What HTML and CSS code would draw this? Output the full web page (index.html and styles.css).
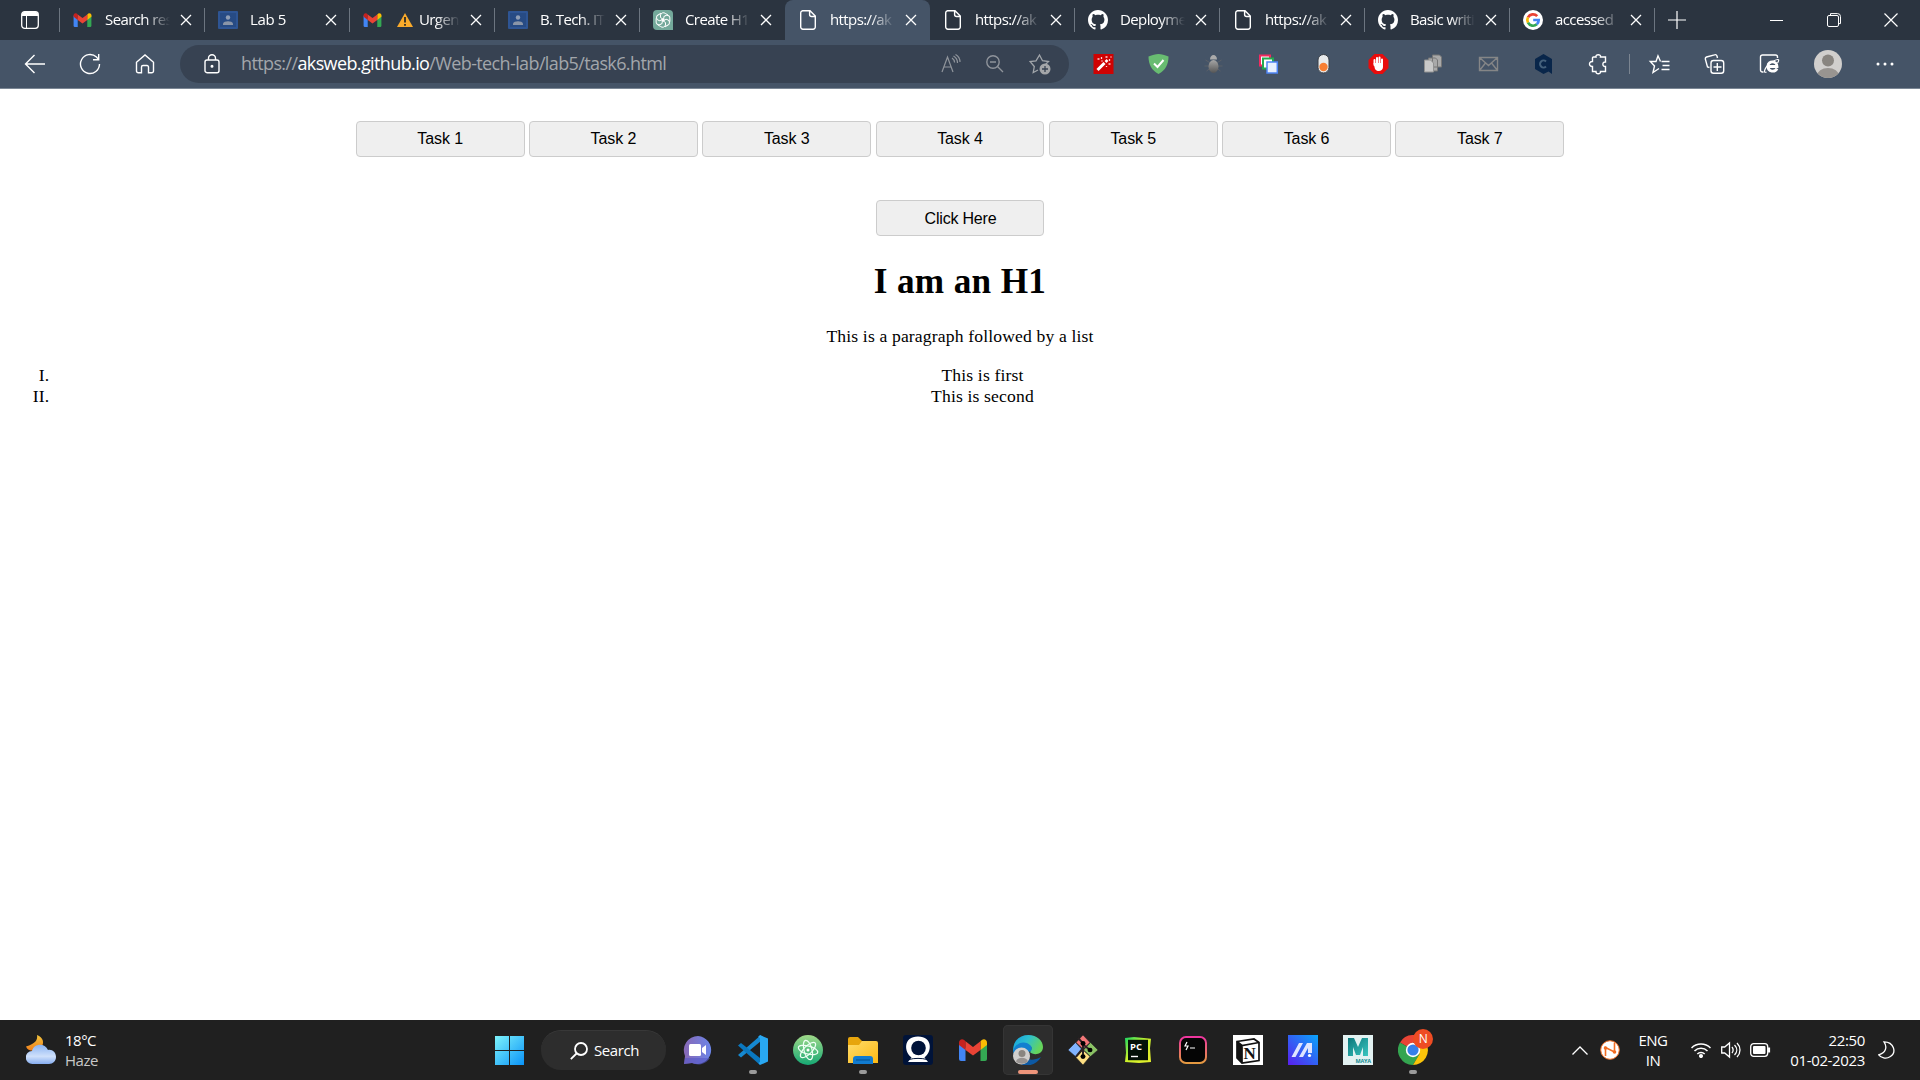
FILE: index.html
```html
<!DOCTYPE html>
<html lang="en">
<head>
<meta charset="utf-8">
<title>Lab 5 - Task 6</title>
<link rel="stylesheet" href="styles.css">
</head>
<body>
<svg class="defs" width="0" height="0">
  <defs>
    <linearGradient id="gWin" x2="1" y2="1"><stop stop-color="#7df3fb"/><stop offset="1" stop-color="#0a93f8"/></linearGradient>
    <linearGradient id="gChat" x2="1" y2="0"><stop stop-color="#8868b5"/><stop offset="1" stop-color="#6b85e8"/></linearGradient>
    <linearGradient id="gAtom" x2="0" y2="1"><stop stop-color="#a0d989"/><stop offset="1" stop-color="#16a974"/></linearGradient>
    <linearGradient id="gFolder" x2="1" y2="1"><stop stop-color="#ffdc6b"/><stop offset="1" stop-color="#fdb913"/></linearGradient>
    <linearGradient id="gEdge" x2="1" y2="0.4"><stop stop-color="#159ee0"/><stop offset=".5" stop-color="#2cc0cf"/><stop offset="1" stop-color="#65d45b"/></linearGradient>
    <linearGradient id="gPy" x2="1" y2="1"><stop stop-color="#15d763"/><stop offset=".45" stop-color="#c9f12b"/><stop offset="1" stop-color="#e6ef2c"/></linearGradient>
    <linearGradient id="gTerm" x2="0" y2="1"><stop stop-color="#ef35a0"/><stop offset="1" stop-color="#e49a40"/></linearGradient>
    <linearGradient id="gMx" x1="0" y1="1" x2="1" y2="0"><stop stop-color="#5a1eee"/><stop offset="1" stop-color="#08a6fb"/></linearGradient>
    <linearGradient id="gMaya" x2="1" y2="1"><stop stop-color="#0b777b"/><stop offset="1" stop-color="#3bc6c0"/></linearGradient>
    <linearGradient id="gCloud" x2="0" y2="1"><stop stop-color="#8bb4f2"/><stop offset=".6" stop-color="#cfe0fb"/><stop offset="1" stop-color="#86aef0"/></linearGradient>
    <linearGradient id="gMoon" x2="0" y2="1"><stop stop-color="#f2c53d"/><stop offset="1" stop-color="#f07f1c"/></linearGradient>
    <linearGradient id="gBug" x2="0" y2="1"><stop stop-color="#a5a5a5"/><stop offset="1" stop-color="#555"/></linearGradient>
  </defs>
  <symbol id="gmail" viewBox="0 0 28 22">
    <path fill="#4285f4" d="M0 4v16a2 2 0 0 0 2 2h4.500V9z"/>
    <path fill="#34a853" d="M28 4v16a2 2 0 0 1-2 2h-4.500V9z"/>
    <path fill="#c5221f" d="M0 3.500V6l6.500 5V2.300L5.200 1C3-.700 0 .6 0 3.500z"/>
    <path fill="#fbbc04" d="M28 3.500V6l-6.500 5V2.300L22.800 1C25-.700 28 .6 28 3.500z"/>
    <path fill="#ea4335" d="M6.500 2.300 14 8l7.500-5.700V11L14 16.600 6.500 11z"/>
  </symbol>
  <symbol id="close" viewBox="0 0 12 12"><path d="M1 1l10 10M11 1 1 11" fill="none" stroke="#fff" stroke-width="1.300"/></symbol>
  <symbol id="page" viewBox="0 0 16 20"><path d="M2.500.700H10L15.300 6v11a2.200 2.200 0 0 1-2.200 2.200H2.900A2.200 2.200 0 0 1 .7 17V2.900A2.200 2.200 0 0 1 2.500.700zM9.600.700V4.500a2 2 0 0 0 2 2h3.600" fill="none" stroke="#fff" stroke-width="1.400"/></symbol>
  <symbol id="classroom" viewBox="0 0 20 18"><rect width="20" height="18" rx="1" fill="#2e5594"/><rect x="2" y="2" width="16" height="14" fill="#274b84"/><circle cx="10" cy="6.500" r="2.200" fill="#8f9eb5"/><path d="M5 14v-1.500c1-3 9-3 10 0V14z" fill="#8995a8"/></symbol>
  <symbol id="github" viewBox="0 0 16 16"><path fill="#fff" d="M8 0C3.580 0 0 3.580 0 8c0 3.540 2.290 6.530 5.470 7.590.4.070.55-.17.55-.38 0-.19-.01-.82-.01-1.490-2.010.37-2.530-.49-2.690-.94-.09-.23-.48-.94-.82-1.130-.28-.15-.68-.52-.01-.53.63-.01 1.080.58 1.230.82.72 1.210 1.870.87 2.330.66.070-.52.28-.87.510-1.070-1.780-.2-3.640-.89-3.640-3.950 0-.87.310-1.590.82-2.150-.08-.2-.36-1.020.08-2.120 0 0 .67-.21 2.200.82.64-.18 1.320-.27 2-.27s1.360.09 2 .27c1.530-1.040 2.200-.82 2.200-.82.44 1.100.16 1.920.08 2.120.51.56.82 1.270.82 2.150 0 3.070-1.870 3.750-3.650 3.950.29.25.54.73.54 1.480 0 1.070-.01 1.930-.01 2.200 0 .21.15.46.55.38A8.010 8.010 0 0 0 16 8c0-4.420-3.580-8-8-8z"/></symbol>
</svg>

<header class="tabs">
  <div class="workspace"><svg width="18" height="18"><rect x=".7" y=".7" width="16.600" height="16.600" rx="3" fill="none" stroke="#fff" stroke-width="1.300"/><path d="M1 3a2 2 0 0 1 2-2h12a2 2 0 0 1 2 2v2H1z" fill="#fff"/><path d="M5.500 5v12" stroke="#fff"/></svg></div>
  <div class="tab"><svg class="fav" width="19" height="14"><use href="#gmail"/></svg><span class="name">Search res</span><svg class="x" width="12" height="12"><use href="#close"/></svg></div>
  <div class="tab"><svg class="fav" width="20" height="18"><use href="#classroom"/></svg><span class="name short">Lab 5</span><svg class="x" width="12" height="12"><use href="#close"/></svg></div>
  <div class="tab"><svg class="fav" width="19" height="14"><use href="#gmail"/></svg><span class="name"><svg class="warn" width="16" height="14"><path d="M8 0l8 14H0z" fill="#fbab2b"/><path d="M8 4v5.500M8 11v1.800" stroke="#222" stroke-width="1.700"/></svg>Urgen</span><svg class="x" width="12" height="12"><use href="#close"/></svg></div>
  <div class="tab"><svg class="fav" width="20" height="18"><use href="#classroom"/></svg><span class="name">B. Tech. IT</span><svg class="x" width="12" height="12"><use href="#close"/></svg></div>
  <div class="tab before-active"><svg class="fav" width="20" height="20"><path d="M4 0h12a4 4 0 0 1 4 4v16H4a4 4 0 0 1-4-4V4a4 4 0 0 1 4-4z" fill="#74a99b"/><g transform="translate(10 10)" fill="none" stroke="#fff" stroke-width="1"><path id="petal" d="M-2.500-2.500V-5A3 3 0 0 1 2.300-6.600L5-5M-2.500-2.500 1.500.2"/><use href="#petal" transform="rotate(60)"/><use href="#petal" transform="rotate(120)"/><use href="#petal" transform="rotate(180)"/><use href="#petal" transform="rotate(240)"/><use href="#petal" transform="rotate(300)"/></g></svg><span class="name">Create H1</span><svg class="x" width="12" height="12"><use href="#close"/></svg></div>
  <div class="tab active"><svg class="fav" width="16" height="20"><use href="#page"/></svg><span class="name">https://ak</span><svg class="x" width="12" height="12"><use href="#close"/></svg></div>
  <div class="tab"><svg class="fav" width="16" height="20"><use href="#page"/></svg><span class="name">https://ak</span><svg class="x" width="12" height="12"><use href="#close"/></svg></div>
  <div class="tab"><svg class="fav" width="20" height="20"><use href="#github"/></svg><span class="name">Deployme</span><svg class="x" width="12" height="12"><use href="#close"/></svg></div>
  <div class="tab"><svg class="fav" width="16" height="20"><use href="#page"/></svg><span class="name">https://ak</span><svg class="x" width="12" height="12"><use href="#close"/></svg></div>
  <div class="tab"><svg class="fav" width="20" height="20"><use href="#github"/></svg><span class="name">Basic writi</span><svg class="x" width="12" height="12"><use href="#close"/></svg></div>
  <div class="tab"><svg class="fav" width="20" height="20"><circle cx="10" cy="10" r="10" fill="#fff"/><g fill="none" stroke-width="2.700"><path d="M14.200 6.200A5.700 5.700 0 0 0 5 7.300" stroke="#ea4335"/><path d="M5 7.300a5.700 5.700 0 0 0 0 5.400" stroke="#fbbc05"/><path d="M5 12.700a5.700 5.700 0 0 0 8.800 1.600" stroke="#34a853"/><path d="M13.800 14.300A5.700 5.700 0 0 0 15.700 10H10.200" stroke="#4285f4"/></g></svg><span class="name">accessed</span><svg class="x" width="12" height="12"><use href="#close"/></svg></div>
  <div class="newtab"><svg width="18" height="18"><path d="M9 0v18M0 9h18" stroke="#fff" stroke-width="1.200"/></svg></div>
  <div class="window">
    <svg width="14" height="14"><path d="M0 7.500h13" stroke="#fff"/></svg>
    <svg width="14" height="14"><path d="M3.500 2.500V.6h7a3 3 0 0 1 3 3v7h-2" fill="none" stroke="#fff"/><rect x=".5" y="2.500" width="11" height="11" rx="1.500" fill="none" stroke="#fff"/></svg>
    <svg width="14" height="14"><path d="M.5.500l13 13M13.500.500l-13 13" stroke="#fff" stroke-width="1.200"/></svg>
  </div>
</header>

<div class="toolbar">
  <div class="nav">
    <svg width="22" height="20" fill="none" stroke="#fff" stroke-width="1.400"><path d="M10.500 1 1.500 10l9 9M1.500 10H21"/></svg>
    <svg width="22" height="22" fill="none" stroke="#fff" stroke-width="1.400"><path d="M20.500 11a9.500 9.500 0 1 1-3-6.900l1.700 2M19.700 1v5.700H14"/></svg>
    <svg width="20" height="20" fill="none" stroke="#fff" stroke-width="1.400"><path d="M1.500 8.200 10 1l8.500 7.200V17a1.800 1.800 0 0 1-1.800 1.800h-3.200V13a1.500 1.500 0 0 0-1.500-1.500H8A1.500 1.500 0 0 0 6.500 13v5.800H3.300A1.800 1.800 0 0 1 1.500 17z"/></svg>
  </div>
  <div class="address">
    <svg class="lock" width="16" height="20" fill="none" stroke="#fff" stroke-width="1.400"><rect x="1" y="6" width="14" height="12.700" rx="2"/><path d="M4.500 6V4.200a3.500 3.500 0 0 1 7 0V6"/><circle cx="8" cy="12.300" r=".8" fill="#fff"/></svg>
    <span class="url">https://<b>aksweb.github.io</b>/Web-tech-lab/lab5/task6.html</span>
    <span class="actions">
      <svg width="20" height="20" fill="none" stroke="#8f949b" stroke-width="1.200"><path d="M1 18 6.500 3 12 18M3 13h7.200M11 4c1.500 1 2.500 2.500 2.600 4.500M12.500 2c2.500 1.400 4 3.500 4 7M14.500.5c3 1.700 4.500 4.500 4.500 7.500"/></svg>
      <svg width="18" height="18" fill="none" stroke="#8f949b" stroke-width="1.400"><circle cx="7" cy="7" r="6.200"/><path d="M11.500 11.500 17 17M4 7h6"/></svg>
      <svg width="22" height="22" fill="none" stroke="#a1a5aa" stroke-width="1.300"><path d="M9 17 4.200 19.500 5.300 13.500 1 8.500l6-.7L10.500 2l3 5.700 6 .8-3 3"/><circle cx="16" cy="16" r="5.500" fill="#a4a6a9" stroke="none"/><path d="M16 13v6M13 16h6" stroke="#374252"/></svg>
    </span>
  </div>
  <div class="extensions">
    <svg width="20" height="20"><path d="M0 0h20v20H0z" fill="#cf0202"/><path d="m4 16 7-7" stroke="#fff" stroke-width="3"/><path d="m12 8 2-2" stroke="#fff" stroke-width="2.500"/><path d="M4 5h2M8 3v2M12 3h2M16 5v2M15 10h2M8 7h1M17 3h1M13 12v1" stroke="#ffd4d4" stroke-width="1.300"/></svg>
    <svg width="20" height="20"><path d="M10 0c3 .3 6 .8 10 2.500C20 10 17 16.500 10 20 3 16.500 0 10 0 2.500 4 .8 7 .3 10 0z" fill="#68bc71"/><path d="m5.500 9.500 3.500 3.500 6-7" fill="none" stroke="#fff" stroke-width="2"/></svg>
    <svg width="18" height="18"><path d="M1 5l5 3m11-3-5 3M0 11h18M2 16l4-3m10 3-4-3" stroke="#5b6069"/><ellipse cx="9" cy="11.500" rx="5" ry="6.500" fill="url(#gBug)"/><path d="M5.500 4.500c0-6 7-6 7 0z" fill="#aaa"/></svg>
    <svg width="20" height="20"><path d="M1.500 1.500h10v10h-10z" fill="#fff" stroke="#f32a60" stroke-width="2"/><path d="M4.500 4.500h10v10h-10z" fill="#fff" stroke="#24a951" stroke-width="2"/><path d="M8.500 8h10.300v11H8.500z" fill="#e8f0fe" stroke="#4d84f5" stroke-width="1.500"/></svg>
    <svg width="12" height="20"><rect x=".5" y=".5" width="11" height="18.500" rx="5.500" fill="#e8eaeb" stroke="#3a3f47"/><circle cx="6" cy="13" r="4.200" fill="#f77e32"/></svg>
    <svg width="20" height="20"><path d="M6 0h8l6 6v8l-6 6H6l-6-6V6z" fill="#e90c0c"/><path d="M6 11V6M8.500 10V4M11 10V3.500M13.500 11V5.500" stroke="#fff" stroke-width="2" stroke-linecap="round"/><path d="M5 9h9.500v4c0 5-6.500 5-8 2z" fill="#fff"/></svg>
    <svg width="20" height="20"><path d="M9 1h7l2 2v10H9zM5 4h7l2 2v11H5z" fill="#a9a9a9" stroke="#777"/><path d="M1 6h6l3 3v9H1z" fill="#c9c9c9" stroke="#929292"/></svg>
    <svg width="20" height="16" fill="none" stroke="#858687" stroke-width="1.400"><path d="M1 1.500h18v13H1zM1 1.500l9 8 9-8M1 14.500 7 7m12 7.500L13 7"/></svg>
    <svg width="20" height="20"><path d="m10 0 8.500 5v15L15 17.500 10 20 1.500 15V5z" fill="#09264a"/><path d="M12.500 7.500a3.500 3.500 0 1 0 0 5" fill="none" stroke="#44617c" stroke-width="2"/></svg>
    <svg width="20" height="20" fill="none" stroke="#fff" stroke-width="1.400"><path d="M5 3h2.500c-.8-3 5.300-3 4.500 0h5v5c-3.500-.5-3.500 5 0 4.500v5h-5c.5 3-5 3-4.500 0H4v-5c-4 .5-4-5.500 0-5V4a1 1 0 0 1 1-1z"/></svg>
  </div>
  <i class="divider"></i>
  <div class="menu">
    <svg width="20" height="20" fill="none" stroke="#fff" stroke-width="1.400"><path d="M11 7.500 8.500 1.800 6.500 7.500H.8L5 12l-1.500 6.500 6-4M12 7.500h8M13 11.500h7M12 15.500h8"/></svg>
    <svg width="20" height="20" fill="none" stroke="#fff" stroke-width="1.400"><path d="M5 13.500 3 13 .8 5A2 2 0 0 1 2 3L10 .8A2 2 0 0 1 12.500 2L13 4"/><rect x="6.500" y="6.500" width="12.700" height="12.700" rx="2.500"/><path d="M12.800 9v8M9 13h8"/></svg>
    <svg width="20" height="20"><path d="M4 18H3a2 2 0 0 1-2-2V3a2 2 0 0 1 2-2h13a2 2 0 0 1 2 2v1" fill="none" stroke="#fff" stroke-width="1.400"/><path d="M17.500 14.500c-2 4-9 3.700-9-2.500 0-5.500 9-5.500 9 .5H9" fill="none" stroke="#fff" stroke-width="2.800"/><path d="M7 18C2 20 7 10 14 7c6-3 6-1 4 2" fill="none" stroke="#fff" stroke-width="1.200"/></svg>
  </div>
  <svg class="avatar" width="28" height="28" viewBox="0 0 28 28"><defs><clipPath id="round"><circle cx="14" cy="14" r="14"/></clipPath></defs><g clip-path="url(#round)"><path fill="#d1cfcd" d="M0 0h28v28H0z"/><circle cx="14" cy="10.500" r="6" fill="#898580"/><ellipse cx="14" cy="26" rx="11" ry="8" fill="#989490"/></g></svg>
  <svg class="dots" width="18" height="4" fill="#fff"><circle cx="2" cy="2" r="1.500"/><circle cx="9" cy="2" r="1.500"/><circle cx="16" cy="2" r="1.500"/></svg>
</div>

<main class="page">
  <nav class="tasks">
    <button>Task 1</button>
    <button>Task 2</button>
    <button>Task 3</button>
    <button>Task 4</button>
    <button>Task 5</button>
    <button>Task 6</button>
    <button>Task 7</button>
  </nav>
  <div class="trigger"><button>Click Here</button></div>
  <h1>I am an H1</h1>
  <p>This is a paragraph followed by a list</p>
  <ol>
    <li>This is first</li>
    <li>This is second</li>
  </ol>
</main>

<footer class="taskbar">
  <div class="weather">
    <svg width="30" height="30"><path d="M11 0c1 5-2 9-11 11.500 2 6 11 5 15 1C19 8 17 2 11 0z" fill="url(#gMoon)"/><path d="M6.500 29a6.500 6.500 0 0 1-.5-13c2-8 13-8 16-1 4-1 8 2 8 7 0 4-3 7-7 7z" fill="url(#gCloud)"/></svg>
    <div class="forecast"><span>18°C</span><span class="sky">Haze</span></div>
  </div>
  <div class="apps">
    <span class="app start"><svg width="29" height="29"  fill="url(#gWin)"><path d="M0 0h14v14H0zM15 0h14v14H15zM0 15h14v14H0zM15 15h14v14H15z"/></svg></span>
    <span class="search"><svg width="18" height="18" fill="none" stroke="#fff" stroke-width="1.800"><circle cx="11" cy="7" r="6"/><path d="M6.500 11.500.8 17.200"/></svg><span class="hint">Search</span></span>
    <span class="app"><svg width="29" height="29"><path d="M15 0a14 14 0 1 1-6 27L1 28l1-8A14.300 14.300 0 0 1 15 0z" fill="url(#gChat)"/><path d="M1 28l1-6h25a14 14 0 0 1-18 5z" fill="#5558c8" opacity=".6"/><rect x="6" y="8" width="12" height="12" rx="1.500" fill="#fff"/><path d="m19 12 4-3v10l-4-3z" fill="#fff"/></svg></span>
    <span class="app running"><svg width="30" height="30"><path d="M0 20l3 2.500L23 6V0z" fill="#1689d1"/><path d="M0 10.500 3 8l19 15v7z" fill="#0a78c0"/><path d="m22 0 8 3.500v23L22 30l-1.500-2 1.500-1V3l-2-1z" fill="#29a8f2"/></svg></span>
    <span class="app"><svg width="30" height="30"><circle cx="15" cy="15" r="15" fill="url(#gAtom)"/><g fill="none" stroke="#effff5" stroke-width="1.200" transform="rotate(15 15 15)"><ellipse cx="15" cy="15" rx="10" ry="4"/><ellipse cx="15" cy="15" rx="10" ry="4" transform="rotate(60 15 15)"/><ellipse cx="15" cy="15" rx="10" ry="4" transform="rotate(120 15 15)"/></g><circle cx="15" cy="15" r="1.500" fill="#fff"/></svg></span>
    <span class="app running"><svg width="30" height="27"><path d="M0 8V2a2 2 0 0 1 2-2h8l4 4v4z" fill="#e7a50d"/><path d="M0 8h11l3-4h14a2 2 0 0 1 2 2v20H0z" fill="url(#gFolder)"/><path d="M5 27v-5a3 3 0 0 1 3-3h14a3 3 0 0 1 3 3v5z" fill="#117bd0"/><path d="M8 23h14" stroke="#05518f"/></svg></span>
    <span class="app"><svg width="30" height="30"><rect width="30" height="30" rx="3" fill="#001339"/><path d="M15 1.500C0 1.500 1 17 8.500 22.500L5 27h20l-3.500-4.500C29 17 30 1.500 15 1.500z" fill="#fff"/><circle cx="15.500" cy="13" r="7.300" fill="#001339"/><path d="M6 24.500c5-1.500 13-1.500 18 0" fill="none" stroke="#001339"/></svg></span>
    <span class="app"><svg width="28" height="22"><use href="#gmail"/></svg></span>
    <span class="app running current"><svg width="30" height="30"><path d="M0 16C0 5 7 0 15.500 0 24 0 30 6 30 12c0 7-8 8.500-12 6-2-1.500.5-2 .5-5C18 9 8 6 0 16z" fill="url(#gEdge)"/><path d="M0 16C2 8 12 4 18 11c1.500 2 .5 4 0 5-5 1-6 8 0 10-6 3-16 1-18-10z" fill="#1280d0"/><path d="M12 16c-3 7 5 12 16 6-5 9-17 11-23 5z" fill="#0c59a4"/><circle cx="8.500" cy="21" r="8.500" fill="#d1cfcd"/><circle cx="9" cy="18.500" r="3.500" fill="#898580"/><path d="M3 26.500c1-5 11-5 12 0-3 3-9 3-12 0z" fill="#979391"/></svg></span>
    <span class="app"><svg width="30" height="30" viewBox="0 0 30 32" preserveAspectRatio="none"><g stroke="#222" stroke-width=".6"><path d="m15 0 7 8-7 7-7-7z" fill="#f27778"/><path d="m7.500 8 7 8-7 7L0 16z" fill="#80b3ff"/><path d="m22.500 8 7.500 8-7.500 7-7-7z" fill="#8bc265"/><path d="m15 16 7 7-7 9-7-8z" fill="#ffe083"/></g><path d="M10 3l5 6v15M15 10l7 6M15 14l-7 9" fill="none" stroke="#2b2224" stroke-width="2"/><circle cx="15" cy="9" r="2.500"/><circle cx="22" cy="16" r="2.500"/><circle cx="15" cy="23" r="2.500"/></svg></span>
    <span class="app"><svg width="26" height="26" viewBox="0 0 26 28" preserveAspectRatio="none"><path d="M0 1 9 0l17 2-1 10 1 15-12 1-14-1 1-10z" fill="url(#gPy)"/><rect x="3" y="3" width="20" height="22" fill="#031108"/><text x="5" y="14" class="pc">PC</text><path d="M6 21h7" stroke="#fff" stroke-width="1.500"/></svg></span>
    <span class="app"><svg width="28" height="28"><rect x="1" y="1" width="26" height="26" rx="6" fill="#050505" stroke="url(#gTerm)" stroke-width="2"/><path d="m8 6-2 4h3l-2 4M11 12h5" fill="none" stroke="#fff" stroke-width="1.200"/></svg></span>
    <span class="app"><svg width="30" height="30"><path fill="#fff" d="M0 0h30v30H0z"/><path d="M4 6.500 21 4l5 3.500v18L9 28l-5-5z" fill="#fff" stroke="#111" stroke-width="1.700"/><path d="M4 6.500 9 10.500l17-3M9 10v18" fill="none" stroke="#111" stroke-width="1.700"/><path d="M4 6.500l5 4V28l-5-5z" fill="#111"/><text x="10.500" y="23.500" class="notion">N</text></svg></span>
    <span class="app"><svg width="30" height="30" ><path fill="url(#gMx)" d="M0 0h30v30H0z"/><path d="M3.500 22 11 8h4L7.500 22zM11 22l8-14h5v10h-4V13l-5 9z" fill="#dfe5ff"/><circle cx="21.500" cy="20.500" r="1.600" fill="#fff"/></svg></span>
    <span class="app"><svg width="30" height="30"><path fill="#e3f2f2" d="M0 0h30v30H0z"/><path d="M5 21V3h6l4 9 4-9h6v18h-5V12l-3 8h-4l-3-8v9z" fill="url(#gMaya)"/><text x="12.500" y="28" class="maya">MAYA</text></svg></span>
    <span class="app running chrome"><svg width="30" height="30" viewBox="0 1 30 30"><path d="M15 16 2 8.500A15 15 0 0 1 28 8.500H15z" fill="#e94435"/><path d="M15 16 2 8.500A15 15 0 0 0 15 31l6.500-11z" fill="#34a550"/><path d="M15 9h13.200A15 15 0 0 1 15 31l6.500-11z" fill="#fbc40a"/><circle cx="15" cy="16" r="7.200" fill="#fff"/><circle cx="15" cy="16" r="5.600" fill="#367fea"/></svg><b class="badge">N</b></span>
  </div>
  <div class="tray">
    <svg class="up" width="16" height="9" fill="none" stroke="#fff" stroke-width="1.300"><path d="m.5 8.500 7.500-7.500 7.500 7.500"/></svg>
    <svg class="sync" width="20" height="20"><circle cx="10" cy="10" r="9.300" fill="#fff" stroke="#f36c21"/><path d="M5.500 16V7.500l9 4.500V2.500" fill="none" stroke="#f36c21" stroke-width="1.600"/><circle cx="5.500" cy="8" r="1.800" fill="#f36c21"/><circle cx="14.500" cy="12" r="1.800" fill="#f36c21"/></svg>
    <div class="lang"><span>ENG</span><span>IN</span></div>
    <svg class="wifi" width="20" height="16" fill="none" stroke="#fff" stroke-width="1.500"><path d="M.5 6a13.400 13.400 0 0 1 19 0M3.500 9a9.200 9.200 0 0 1 13 0M6.300 12a5.200 5.200 0 0 1 7.400 0"/><circle cx="10" cy="14" r="1.300" fill="#fff"/></svg>
    <svg class="sound" width="20" height="18" fill="none" stroke="#fff" stroke-width="1.300"><path d="M.7 6h3L8.500 2v14l-4.800-4h-3zM11 6c1.500 2 1.500 4 0 6M13.500 4c3 3 3 7 0 10M16 2c4 4 4 10 0 14"/></svg>
    <svg class="battery" width="21" height="14"><rect x=".7" y=".7" width="17" height="12.600" rx="3" fill="none" stroke="#fff" stroke-width="1.300"/><rect x="3" y="3" width="12.500" height="8" rx="1" fill="#fff"/><path d="M19 4.500v5" stroke="#fff" stroke-width="2.200"/></svg>
    <div class="clock"><span>22:50</span><span>01-02-2023</span></div>
    <svg class="quiet" width="17" height="18" fill="none" stroke="#fff" stroke-width="1.300"><path d="M6 .8c10 0 13 11 6 15-4 2.500-9 1-11.300-2C8 12 9.500 6 6 .8z"/></svg>
  </div>
</footer>
</body>
</html>
```
FILE: styles.css
```css
* { box-sizing: border-box; }
body {
  margin: 0;
  width: 1920px;
  height: 1080px;
  overflow: hidden;
  display: flex;
  flex-direction: column;
  background: #fff;
  font-family: "Open Sans", "Noto Sans", sans-serif;
}
svg { display: block; flex: none; }
.defs { position: absolute; }

/* Tab strip */
.tabs {
  height: 40px;
  flex: none;
  display: flex;
  background: #2b3440;
  color: #fff;
}
.workspace {
  width: 60px;
  display: flex;
  align-items: center;
  padding-left: 21px;
  background: linear-gradient(#6c7580, #6c7580) right / 1px 24px no-repeat;
}
.tab {
  width: 145px;
  display: flex;
  align-items: center;
  padding: 0 13px;
  background: linear-gradient(#6c7580, #6c7580) right / 1px 24px no-repeat;
}
.tab.before-active { background: none; }
.tab.active {
  background: #455467;
  border-radius: 8px 8px 0 0;
}
.fav { margin-right: 12px; }
.fav[width="16"] { margin: 0 14px 0 2px; }
.fav[width="19"] { margin-right: 13px; }
.name {
  width: 65px;
  height: 24px;
  line-height: 22px;
  padding-bottom: 2px;
  display: flex;
  align-items: center;
  white-space: nowrap;
  font-size: 15px;
  letter-spacing: -0.6px;
  -webkit-mask-image: linear-gradient(90deg, #000 62%, transparent);
  mask-image: linear-gradient(90deg, #000 62%, transparent);
}
.name.short { letter-spacing: -0.35px; }
.warn { margin: 2px 6px 0 2px; }
.x { margin-left: 9.5px; }
.newtab {
  width: 46px;
  display: flex;
  align-items: center;
  padding-left: 13px;
}
.window {
  flex: 1;
  display: flex;
  align-items: center;
  justify-content: flex-end;
  gap: 43px;
  padding-right: 22px;
}

/* Toolbar */
.toolbar {
  height: 49px;
  flex: none;
  display: flex;
  align-items: center;
  background: #455467;
  border-bottom: 1px solid #7b8795;
}
.nav { display: flex; align-items: center; width: 180px; padding-left: 7px; }
.nav svg { margin: 0 calc((55px - 22px) / 2); }
.nav svg[width="20"] { margin: 0 17.5px; }
.address {
  width: 889px;
  height: 38px;
  border-radius: 19px;
  background: #374252;
  display: flex;
  align-items: center;
  padding: 0 18px 0 24px;
}
.url {
  margin-left: 21px;
  flex: 1;
  color: #a2a6ab;
  font-size: 18px;
  letter-spacing: -0.62px;
  line-height: 24px;
  padding-bottom: 2px;
}
.url b { color: #fff; font-weight: 400; }
.actions { display: flex; align-items: center; gap: 25px; }
.extensions { display: flex; width: 551px; margin-left: 7px; margin-right: 1px; }
.extensions svg, .menu svg { width: 55px; }
.extensions, .menu { align-items: center; }
.divider { width: 1px; height: 20px; background: #7b8591; margin-left: 1px; }
.menu { display: flex; margin-left: 2px; }
.extensions svg, .menu svg { overflow: visible; padding-left: 17.5px; }
.extensions svg[width="12"] { padding-left: 21.5px; }
.extensions svg[width="18"] { padding-left: 18.5px; }
.avatar { margin-left: 17px; }
.dots { margin-left: 34px; }

/* Web page, shown at 110% */
.page {
  flex: 1;
  padding: 32px 8.8px 0;
  text-align: center;
  color: #000;
  font: 17.6px/21px "Liberation Serif", "Times New Roman", serif;
  letter-spacing: 0.15px;
}
.tasks { display: flex; justify-content: center; gap: 4.4px; }
.page button {
  width: 168.9px;
  height: 36px;
  padding: 0;
  border: 1px solid #ccc;
  border-radius: 4px;
  background: #efefef;
  color: #000;
  font: 16px "Liberation Sans", Arial, sans-serif;
  letter-spacing: -0.1px;
}
.trigger { display: flex; justify-content: center; margin-top: 43px; }
.trigger button { padding: 2px 0 0 1px; letter-spacing: -0.2px; }
.page h1 { margin: 26px 0 24px; font-size: 35.2px; line-height: 40px; letter-spacing: 0.35px; }
.page p { margin: 0 0 18px; }
.page ol { margin: 0; padding-left: 45px; list-style: upper-roman; }

/* Taskbar */
.taskbar {
  height: 60px;
  flex: none;
  display: flex;
  align-items: center;
  background: #202020;
  color: #fff;
  font-size: 15px;
  line-height: 20px;
  letter-spacing: -0.5px;
}
.weather { width: 482px; display: flex; align-items: center; padding-left: 26px; }
.forecast { display: flex; flex-direction: column; margin-left: 9px; padding-bottom: 1px; }
.sky { color: #c8c8c8; }
.apps { display: flex; align-items: center; height: 60px; }
.app {
  position: relative;
  width: 55px;
  height: 50px;
  display: flex;
  align-items: center;
  justify-content: center;
}
.running::after {
  content: "";
  position: absolute;
  bottom: 1px;
  width: 8px;
  height: 4px;
  border-radius: 2px;
  background: #9a9a9a;
}
.current {
  background: #2d2d2d;
  border-radius: 5px;
  box-shadow: inset 0 0 0 1px #353535;
  width: 50px;
  margin: 0 2.5px;
}
.current::after { width: 20px; background: #ee957b; }
.search {
  width: 125px;
  height: 40px;
  margin: 0 4px 0 4px;
  padding-left: 29px;
  display: flex;
  align-items: center;
  gap: 6px;
  border-radius: 20px;
  border-top: 1px solid #383838;
  background: #2d2d2d;
}
.hint { padding-bottom: 2px; letter-spacing: -0.4px; }
.badge {
  position: absolute;
  right: 7px;
  top: 4px;
  transform: translate(0, -10px);
  width: 20px;
  height: 20px;
  border-radius: 50%;
  background: #ee4c23;
  text-align: center;
  font-size: 12px;
  font-weight: 400;
}
.chrome .badge { transform: none; }
.pc { font: bold 9.5px "Open Sans", sans-serif; letter-spacing: 0; fill: #fff; }
.notion { font: bold 17px "Liberation Serif", serif; fill: #111; }
.maya { font: bold 5.5px "Open Sans", sans-serif; letter-spacing: -.2px; fill: #128b90; }
.tray { margin-left: auto; display: flex; align-items: center; padding-right: 25px; }
.sync { margin-left: 12px; }
.lang { width: 42px; margin: 0 17px 0 12px; }
.lang, .clock { display: flex; flex-direction: column; padding-bottom: 1px; }
.lang { align-items: center; margin-left: 12px; }
.sound { margin-left: 10px; }
.battery { margin-left: 9px; }
.clock { width: 94px; align-items: flex-end; letter-spacing: -0.35px; }
.quiet { margin-left: 13px; }
```
